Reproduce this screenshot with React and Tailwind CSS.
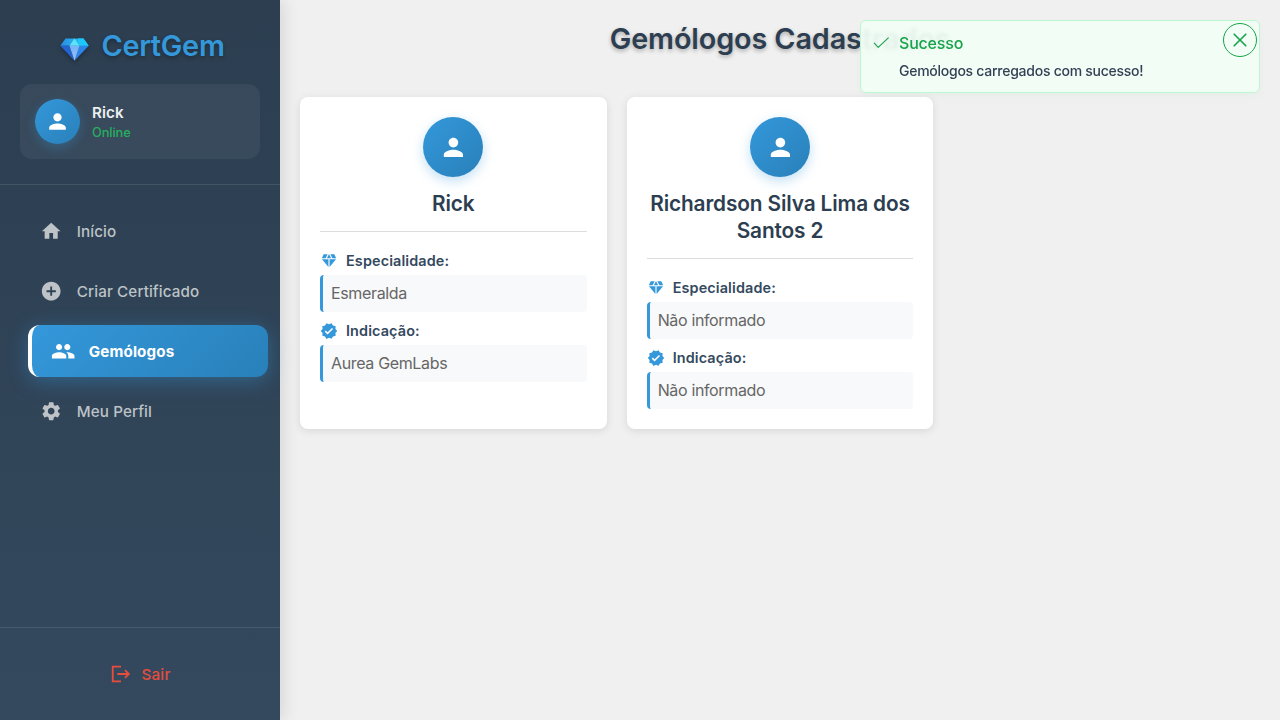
import { MdHome, MdAddCircle, MdPeople, MdSettings, MdPerson, MdDiamond, MdVerified } from "react-icons/md";

const navItems = [
  { label: "Início", Icon: MdHome, tracking: "tracking-[0.1px]" },
  { label: "Criar Certificado", Icon: MdAddCircle, tracking: "tracking-[0.12px]" },
  { label: "Gemólogos", Icon: MdPeople, active: true, tracking: "tracking-[0.12px]" },
  { label: "Meu Perfil", Icon: MdSettings, tracking: "tracking-[0.1px]" },
];

const gemologists = [
  { name: "Rick", specialty: "Esmeralda", referral: "Aurea GemLabs" },
  { name: "Richardson Silva Lima dos Santos 2", specialty: "Não informado", referral: "Não informado" },
];

function Gem() {
  return (
    <svg viewBox="0 0 29 23" className="mt-[6px] h-[23px] w-[29px] drop-shadow-[0_2px_2px_rgba(0,0,0,0.3)]">
      <defs>
        <linearGradient id="gemTop" x1="0" x2="1">
          <stop offset="0" stopColor="#2a8de0" />
          <stop offset="1" stopColor="#1fd0fb" />
        </linearGradient>
        <linearGradient id="gemMid" x1="0" y1="0" x2="0" y2="1">
          <stop offset="0" stopColor="#74b4f6" />
          <stop offset="1" stopColor="#9dbcf8" />
        </linearGradient>
      </defs>
      <path d="M5.5 0.5h18L28.7 7.8H0.3z" fill="url(#gemTop)" />
      <path d="M18 0.5h5.5L28.7 7.8h-9.2z" fill="#1cc8fb" />
      <path d="M0.3 7.8h9.5L14.5 22.7z" fill="#2464cf" />
      <path d="M28.7 7.8h-9.5L14.5 22.7z" fill="#2c86ea" />
      <path d="M14.5 0.5l5 7.3h-10z" fill="#5fe0f5" />
      <path d="M9.5 7.8h10l-5 14.9z" fill="url(#gemMid)" />
    </svg>
  );
}

function LogoutIcon() {
  return (
    <svg viewBox="0 0 24 24" className="size-[22px]" fill="currentColor">
      <path d="M17 7l-1.41 1.41L18.17 11H8v2h10.17l-2.58 2.58L17 17l5-5zM4 5h8V3H2v18h10v-2H4V5z" />
    </svg>
  );
}

function NavItem({ label, Icon, active, tracking }) {
  return (
    <a
      className={
        "flex h-[52px] items-center gap-[14.4px] rounded-xl px-5 text-[15.2px] " +
        (active
          ? "translate-x-2 border-l-4 border-white bg-linear-135 from-[#3498db] to-[#2980b9] font-bold text-white shadow-[0_4px_20px_rgba(52,152,219,0.4)]"
          : "font-medium text-[#bdc3c7]")
      }
    >
      <Icon className={"size-[22.4px] shrink-0 " + (active ? "scale-110" : "")} />
      <span className={"pt-[2px] " + tracking}>{label}</span>
    </a>
  );
}

function Field({ Icon, label, value }) {
  return (
    <div>
      <div className="flex h-7 items-center gap-2 text-[14.4px] font-semibold tracking-[0.13px] text-[#34495e]">
        <Icon className="size-[18px] text-[#3498db]" />
        <span>{label}</span>
      </div>
      <div className="flex h-[37px] items-center rounded border-l-[3px] border-[#3498db] bg-[#f8f9fa] px-2 pb-[2px] text-[16px] tracking-[-0.35px] text-[#666]">
        {value}
      </div>
    </div>
  );
}

function GemologistCard({ name, specialty, referral }) {
  return (
    <article className="rounded-lg bg-white p-5 shadow-[0_2px_8px_rgba(0,0,0,0.1)]">
      <div className="mx-auto flex size-[60px] items-center justify-center rounded-full bg-linear-135 from-[#3498db] to-[#2980b9] text-white shadow-[0_4px_12px_rgba(52,152,219,0.3)]">
        <MdPerson className="size-[28.8px]" />
      </div>
      <h3 className="mt-[13px] border-b border-[#ddd] pb-[14px] text-center text-[20.8px] leading-[27px] font-semibold tracking-[-0.12px] text-[#2c3e50]">
        {name}
      </h3>
      <div className="flex flex-col gap-[5px] pt-[15px]">
        <Field Icon={MdDiamond} label="Especialidade:" value={specialty} />
        <Field Icon={MdVerified} label="Indicação:" value={referral} />
      </div>
    </article>
  );
}

function Toast() {
  return (
    <div className="absolute top-5 right-5 flex h-[73px] w-[400px] gap-2 rounded-md border border-[#bbf7d0] bg-[#f0fdf4]/95 pt-3 pl-3 shadow-[0_4px_8px_rgba(34,197,94,0.04)] backdrop-blur-[1.5px]">
      <svg viewBox="0 0 18 18" className="mt-px size-[18px] shrink-0" fill="none" stroke="#16a34a" strokeWidth="1.1" strokeLinecap="round" strokeLinejoin="round">
        <path d="M1.3 9.2L5.2 13.4 15.3 3.8" />
      </svg>
      <div className="flex-1">
        <div className="-mt-px text-[16px] leading-[22px] font-medium tracking-[-0.2px] text-[#16a34a]">Sucesso</div>
        <div className="mt-2 text-[14px] leading-[18px] font-medium tracking-[-0.26px] text-[#334155]">Gemólogos carregados com sucesso!</div>
      </div>
      <button className="-mt-[10px] mr-[2px] flex size-[34px] items-center justify-center rounded-full border border-[#16a34a]">
        <svg viewBox="0 0 14 14" className="size-[14px]" fill="none" stroke="#16a34a" strokeWidth="1.6" strokeLinecap="round">
          <path d="M1.2 1.2l11.6 11.6M12.8 1.2L1.2 12.8" />
        </svg>
      </button>
    </div>
  );
}

export default function App() {
  return (
    <div className="relative flex h-[720px] w-[1280px] overflow-hidden bg-[#f0f0f0] font-['Inter','Liberation_Sans',sans-serif]">
      <aside className="z-10 flex w-[280px] shrink-0 flex-col bg-linear-to-b from-[#2c3e50] to-[#34495e] shadow-[4px_0_15px_rgba(0,0,0,0.1)]">
        <div className="border-b border-white/10 px-5 pb-[25px]">
          <div className="flex h-[84px] items-center justify-center gap-3 pt-2 pl-[5px]">
            <Gem />
            <h2 className="-mt-px text-[28.8px] font-semibold tracking-[-0.25px] text-[#3498db] text-shadow-[0_2px_4px_rgba(0,0,0,0.3)]">CertGem</h2>
          </div>
          <div className="flex h-[75px] items-center gap-3 rounded-xl bg-white/5 px-[15px]">
            <div className="flex size-[45px] items-center justify-center rounded-full bg-linear-135 from-[#3498db] to-[#2980b9] text-white shadow-[0_4px_12px_rgba(52,152,219,0.3)]">
              <MdPerson className="size-[25px]" />
            </div>
            <div className="pt-[2px]">
              <div className="text-[15.2px] leading-5 font-semibold tracking-[0.1px] text-[#ecf0f1]">Rick</div>
              <div className="text-[12.8px] leading-5 font-medium tracking-[-0.1px] text-[#27ae60]">Online</div>
            </div>
          </div>
        </div>
        <nav className="flex flex-1 flex-col gap-2 p-5">
          {navItems.map((item) => (
            <NavItem key={item.label} {...item} />
          ))}
        </nav>
        <div className="border-t border-white/10 p-5">
          <button className="flex h-[52px] w-full items-center justify-center gap-[10px] text-[15.2px] font-medium tracking-[0.2px] text-[#e74c3c]">
            <LogoutIcon />
            <span className="pt-[2px]">Sair</span>
          </button>
        </div>
      </aside>
      <main className="flex-1 px-5">
        <h1 className="flex h-[97px] items-start justify-center pt-[19px] text-[28.8px] leading-10 font-semibold tracking-[-0.12px] text-[#2c3e50] text-shadow-[0_2px_4px_rgba(0,0,0,0.3)]">
          Gemólogos Cadastrados
        </h1>
        <div className="grid grid-cols-3 gap-5">
          {gemologists.map((g) => (
            <GemologistCard key={g.name} {...g} />
          ))}
        </div>
      </main>
      <Toast />
    </div>
  );
}
